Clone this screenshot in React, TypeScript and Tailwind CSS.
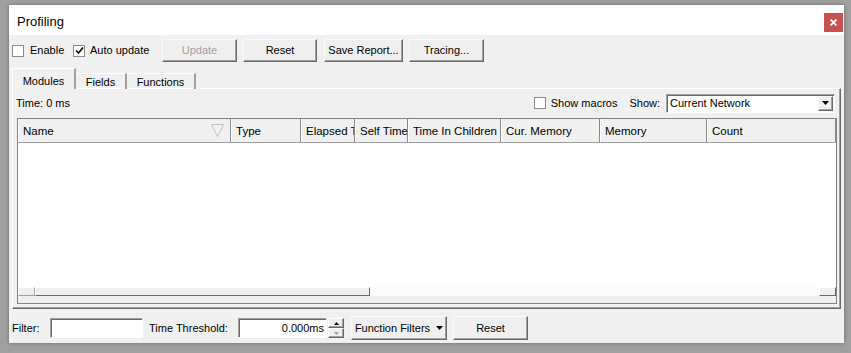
const font = { fontFamily: '"Liberation Sans", Arial, sans-serif' };

const raised =
  "border border-t-[#fafafa] border-l-[#fafafa] border-b-[#696969] border-r-[#696969] shadow-[inset_-1px_-1px_#a0a0a0] bg-[#efefef]";
const sunken =
  "border border-t-[#a0a0a0] border-l-[#a0a0a0] border-b-white border-r-white shadow-[inset_1px_1px_#696969] bg-white";

const columns = [
  { label: "Name", w: "w-[213px]", sort: true },
  { label: "Type", w: "w-[70px]" },
  { label: "Elapsed Time", w: "w-[54px]" },
  { label: "Self Time", w: "w-[53px]" },
  { label: "Time In Children", w: "w-[93px]" },
  { label: "Cur. Memory", w: "w-[99px]" },
  { label: "Memory", w: "w-[107px]" },
  { label: "Count", w: "flex-1" },
];

const CheckBox = ({ checked }: { checked?: boolean }) => (
  <div className="w-[12px] h-[12px] bg-white border border-[#8a8a8a] flex items-center justify-center shrink-0">
    {checked && (
      <svg width="9" height="9" viewBox="0 0 9 9">
        <path d="M1 4.5 L3.5 7 L8 1.5" stroke="#000" strokeWidth="1.6" fill="none" />
      </svg>
    )}
  </div>
);

const Button = ({ label, w, disabled, h = "h-[23px]" }: { label: string; w: string; disabled?: boolean; h?: string }) => (
  <div className={`${w} ${h} ${raised} flex items-center justify-center text-[11px] ${disabled ? "text-[#a0a0a0]" : "text-black"}`}>
    {label}
  </div>
);

const App = () => {
  return (
    <div className="w-[851px] h-[353px] bg-[#a0a0a0] pt-[5px] pl-[9px] overflow-hidden" style={font}>
      <div className="w-[835px] h-[338px] bg-[#f0f0f0] flex flex-col shadow-[0_0_4px_rgba(0,0,0,0.35)]">
        {/* TITLE */}
        <div className="h-[30px] bg-white flex items-start justify-between shrink-0">
          <div className="pl-[8px] pt-[7px] text-[13px] text-black">Profiling</div>
          <div className="mt-[8px] mr-[1px] w-[19px] h-[19px] bg-[#c75050] flex items-center justify-center">
            <svg width="7" height="7" viewBox="0 0 7 7">
              <path d="M0.5 0.5 L6.5 6.5 M6.5 0.5 L0.5 6.5" stroke="#fff" strokeWidth="1.8" />
            </svg>
          </div>
        </div>

        {/* TOOLBAR */}
        <div className="mt-[4px] h-[23px] flex items-center text-[11px] text-black">
          <div className="w-[64px] pl-[3px] flex items-center gap-[6px]">
            <CheckBox />
            <span>Enable</span>
          </div>
          <div className="w-[89px] flex items-center gap-[5px]">
            <CheckBox checked />
            <span>Auto update</span>
          </div>
          <div className="flex items-center gap-[6px]">
            <Button label="Update" w="w-[75px]" disabled />
            <Button label="Reset" w="w-[74px]" />
            <div className="ml-[1px]">
              <Button label="Save Report..." w="w-[79px]" />
            </div>
            <Button label="Tracing..." w="w-[75px]" />
          </div>
        </div>

        {/* TABS */}
        <div className="mt-[6px] ml-[3px] flex items-end h-[21px] text-[11px] text-black relative z-10">
          <div className="w-[64px] h-[21px] bg-[#f0f0f0] border-l border-t border-white border-r-2 border-r-[#a0a0a0] flex items-center justify-center pt-[4px]">
            Modules
          </div>
          <div className="w-[51px] h-[16px] border-t border-white border-r-2 border-r-[#a0a0a0] flex items-center justify-center pt-[1px]">
            Fields
          </div>
          <div className="w-[69px] h-[16px] border-t border-white border-r-2 border-r-[#a0a0a0] flex items-center justify-center pt-[1px]">
            Functions
          </div>
        </div>

        {/* PANEL */}
        <div className="-mt-px ml-[3px] w-[829px] h-[221px] border border-t-white border-l-white border-b-[#696969] border-r-[#696969] shadow-[inset_-1px_-1px_#a0a0a0] flex flex-col text-[11px] text-black">
          <div className="h-[28px] flex items-center pl-[3px] pr-[5px]">
            <span>Time: 0 ms</span>
            <div className="ml-auto flex items-center">
              <CheckBox />
              <span className="ml-[5px]">Show macros</span>
              <span className="ml-[12px]">Show:</span>
              <div className={`ml-[6px] w-[169px] h-[19px] ${sunken} flex items-center pl-[3px] pr-px`}>
                <span className="flex-1">Current Network</span>
                <div className={`w-[15px] h-[15px] ${raised} flex items-center justify-center`}>
                  <svg width="7" height="4" viewBox="0 0 7 4">
                    <path d="M0 0 H7 L3.5 4 Z" fill="#000" />
                  </svg>
                </div>
              </div>
            </div>
          </div>

          {/* LIST */}
          <div className="mt-[1px] ml-[4px] w-[820px] h-[186px] border border-[#828282] bg-[#f0f0f0] flex flex-col">
            <div className="h-[24px] flex bg-[#f0f0f0] border-b border-[#a0a0a0]">
              {columns.map((c) => (
                <div
                  key={c.label}
                  className={`${c.w} h-full border-l border-white border-r border-r-[#8a8a8a] flex items-center pl-[4px] pt-[3px] overflow-hidden whitespace-nowrap relative`}
                >
                  <span className="text-[11.5px]">{c.label}</span>
                  {c.sort && (
                    <svg className="absolute right-[6px] top-[5px]" width="13" height="13" viewBox="0 0 13 13">
                      <path d="M0.5 0.5 H12.5 L6.5 12.5 Z" fill="none" stroke="#c0c0c0" />
                    </svg>
                  )}
                </div>
              ))}
            </div>
            <div className="h-[144px] bg-white" />
            <div className="h-[9px] flex bg-[repeating-conic-gradient(#f6f6f6_0%_25%,#ffffff_0%_50%)] bg-[length:2px_2px]">
              <div className="w-[17px] h-full border border-white border-b-[#a0a0a0] border-r-[#a0a0a0] bg-[#efefef]" />
              <div className="w-[335px] h-full border border-white border-b-[#696969] border-r-[#696969] bg-[#efefef]" />
              <div className="flex-1" />
              <div className="w-[17px] h-full border border-white border-b-[#696969] border-r-[#696969] bg-[#efefef]" />
            </div>
            <div className="flex-1" />
          </div>
        </div>

        {/* BOTTOM */}
        <div className="mt-[7px] h-[24px] flex items-center text-[11px] text-black">
          <span className="ml-[3px] w-[38px]">Filter:</span>
          <div className={`w-[93px] h-[20px] ${sunken}`} />
          <span className="ml-[6px] w-[89px]">Time Threshold:</span>
          <div className={`w-[89px] h-[20px] ${sunken} flex items-center justify-end pr-[2px]`}>0.000ms</div>
          <div className="ml-[1px] w-[16px] h-[20px] flex flex-col">
            <div className={`h-[10px] ${raised} flex items-center justify-center`}>
              <svg width="5" height="3" viewBox="0 0 5 3">
                <path d="M0 3 H5 L2.5 0 Z" fill="#000" />
              </svg>
            </div>
            <div className={`h-[10px] ${raised} flex items-center justify-center`}>
              <svg width="5" height="3" viewBox="0 0 5 3">
                <path d="M0 0 H5 L2.5 3 Z" fill="#a0a0a0" />
              </svg>
            </div>
          </div>
          <div className="ml-[7px]">
            <div className={`w-[96px] h-[24px] ${raised} flex items-center justify-center gap-[6px]`}>
              <span>Function Filters</span>
              <svg width="7" height="4" viewBox="0 0 7 4">
                <path d="M0 0 H7 L3.5 4 Z" fill="#000" />
              </svg>
            </div>
          </div>
          <div className="ml-[6px]">
            <Button label="Reset" w="w-[75px]" h="h-[24px]" />
          </div>
        </div>
      </div>
    </div>
  );
};

export default App;
